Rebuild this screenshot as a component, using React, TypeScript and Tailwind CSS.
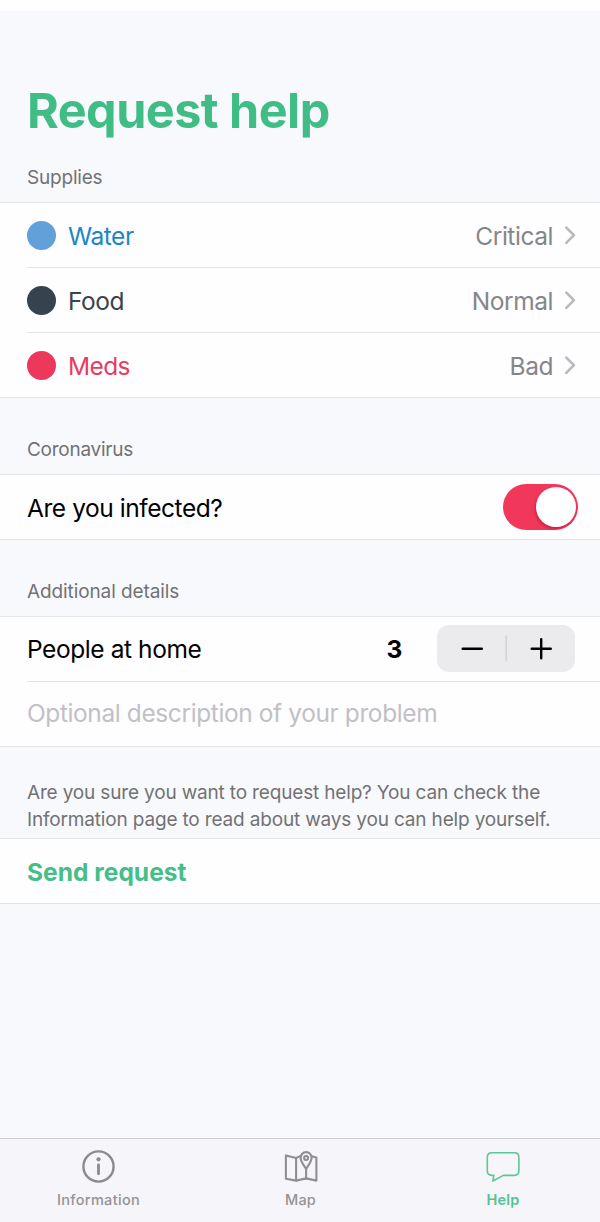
import type { ReactNode } from "react";

type Supply = { name: string; level: string; dot: string; text: string };

const supplies: Supply[] = [
  { name: "Water", level: "Critical", dot: "bg-[#61a0d8]", text: "text-[#1b87c9]" },
  { name: "Food", level: "Normal", dot: "bg-[#37424f]", text: "text-[#3b434d]" },
  { name: "Meds", level: "Bad", dot: "bg-[#ec385b]", text: "text-[#e63d5f] tracking-[-0.6px]" },
];

function Chevron() {
  return (
    <svg className="ml-[11px] h-[20px] w-[13px]" viewBox="0 0 13 20" fill="none" stroke="#b9b9bc" strokeWidth="2.6" strokeLinecap="round" strokeLinejoin="round">
      <path d="M2.3 2.6 9.9 10.2 2.3 17.8" />
    </svg>
  );
}

function SectionLabel({ children, className }: { children: ReactNode; className: string }) {
  return (
    <div className={`flex items-end border-b border-[#e4e5e9] pb-[11px] pl-[27px] text-[19px] leading-[26px] text-[#727274] ${className}`}>
      {children}
    </div>
  );
}

function InfoIcon() {
  return (
    <svg className="h-[36px] w-[36px]" viewBox="0 0 36 36" fill="none" stroke="#8b8b8d">
      <circle cx="17.5" cy="18.5" r="15.1" strokeWidth="2.4" />
      <circle cx="17.5" cy="11.3" r="2.1" fill="#8b8b8d" stroke="none" />
      <path d="M17.5 16.8V25.8" strokeWidth="2.8" strokeLinecap="round" />
    </svg>
  );
}

function MapIcon() {
  return (
    <svg className="h-[36px] w-[36px]" viewBox="0 0 36 36" fill="none" stroke="#8f8f91" strokeWidth="2.1" strokeLinejoin="round" strokeLinecap="round">
      <path d="M18.3 7.8 13.1 9.9 2.9 7.4V30.7L13.1 32.6 23.1 30.4 33.4 32.6V9.5L28.8 8.2" />
      <path d="M13.1 9.9V32.6M23.1 20.6V30.4" />
      <path d="M23.1 20.8C21.6 18.3 17.6 13.7 17.6 9.7A5.5 5.6 0 0 1 28.6 9.7C28.6 13.7 24.6 18.3 23.1 20.8Z" />
      <circle cx="23.1" cy="10" r="2" />
    </svg>
  );
}

function ChatIcon() {
  return (
    <svg className="h-[36px] w-[36px]" viewBox="0 0 36 36" fill="none" stroke="#5cc797" strokeWidth="1.6" strokeLinejoin="round">
      <path d="M7 4.8H29.2Q33.9 4.8 33.9 9.4V22.8Q33.9 27.4 29.2 27.4H18.3L7.9 33L8.8 27.4H7Q2.3 27.4 2.3 22.8V9.4Q2.3 4.8 7 4.8Z" />
    </svg>
  );
}

export default function App() {
  return (
    <div className="flex h-[1222px] w-[600px] flex-col overflow-hidden border-t-[11px] border-[#fefefe] bg-[#f8f9fd] font-['Inter',sans-serif]">
      <h1 className="mt-[70px] h-[60px] pl-[27px] text-[48.5px] leading-[60px] font-bold tracking-[-0.52px] text-[#40bd85]">
        Request help
      </h1>
      <SectionLabel className="h-[62px] tracking-[-0.2px]">Supplies</SectionLabel>
      <div className="flex flex-col border-b border-[#e4e3e8] bg-[#fefdff] pl-[27px]">
        {supplies.map((s) => (
          <div key={s.name} className="flex h-[65px] items-center border-b border-[#e4e3e8] pr-[23px] text-[24.5px] tracking-[-0.45px] last:h-[64px] last:border-b-0">
            <span className={`mr-[12px] size-[29px] rounded-full ${s.dot}`} />
            <span className={`pt-[2px] ${s.text}`}>{s.name}</span>
            <span className="ml-auto pt-[2px] text-[#868688]">{s.level}</span>
            <Chevron />
          </div>
        ))}
      </div>
      <SectionLabel className="h-[77px] tracking-[-0.26px]">Coronavirus</SectionLabel>
      <div className="flex h-[65px] items-center justify-between border-b border-[#e4e3e8] bg-[#fefdff] pr-[22px] pl-[27px] text-[24.5px] tracking-[-0.44px] text-black">
        <span className="pt-[2px]">Are you infected?</span>
        <span className="flex h-[46px] w-[75px] items-center justify-end rounded-full bg-[#f2385a] pr-[2.5px]">
          <span className="size-[40px] rounded-full bg-white shadow-[-1px_2px_3px_rgba(120,0,30,0.35)]" />
        </span>
      </div>
      <SectionLabel className="h-[77px] tracking-[-0.1px]">Additional details</SectionLabel>
      <div className="flex flex-col border-b border-[#e4e3e8] bg-[#fefdff] pl-[27px] text-[24.5px] tracking-[-0.42px]">
        <div className="flex h-[65px] items-center border-b border-[#e4e3e8] pr-[25px] text-black">
          <span className="pt-px">People at home</span>
          <span className="mr-[35px] ml-auto pt-px font-bold">3</span>
          <span className="mb-px flex h-[47px] w-[138px] items-center rounded-[12px] bg-[#ebebed]">
            <svg className="h-full w-full" viewBox="0 0 138 47" fill="none" stroke="#000" strokeWidth="2.4" strokeLinecap="round">
              <path d="M25.7 23.7H44.8M94.7 23.7H113.8M104.2 14.2V33.2" />
              <path d="M69.2 11V36" stroke="#d3d3d6" strokeWidth="1.5" />
            </svg>
          </span>
        </div>
        <div className="flex h-[64px] items-center pb-[2px] tracking-[-0.4px] text-[#c1c1c4]">Optional description of your problem</div>
      </div>
      <div className="h-[92px] border-b border-[#e4e5e9] pt-[33px] pl-[27px] text-[19px] leading-[26.5px] tracking-[-0.165px] whitespace-nowrap text-[#727274]">
        <div>Are you sure you want to request help? You can check the</div>
        <div>Information page to read about ways you can help yourself.</div>
      </div>
      <div className="flex h-[65px] items-center border-b border-[#e4e3e8] bg-[#fefdff] pt-[3px] pl-[27px] text-[24.5px] font-bold tracking-[0.04px] text-[#45be87]">Send request</div>
      <nav className="mt-auto grid h-[84px] shrink-0 grid-cols-[197px_207px_198px] border-t border-[#cfcfd3] bg-[#f6f5f9] pt-[9px] text-[14.5px] leading-[22px] font-medium text-[#939395]">
        <div className="flex flex-col items-center gap-[5px] tracking-[0.32px]"><InfoIcon />Information</div>
        <div className="flex flex-col items-center gap-[5px] tracking-[0.2px]"><MapIcon />Map</div>
        <div className="flex flex-col items-center gap-[5px] font-semibold tracking-[0.15px] text-[#52c391]"><ChatIcon />Help</div>
      </nav>
    </div>
  );
}
